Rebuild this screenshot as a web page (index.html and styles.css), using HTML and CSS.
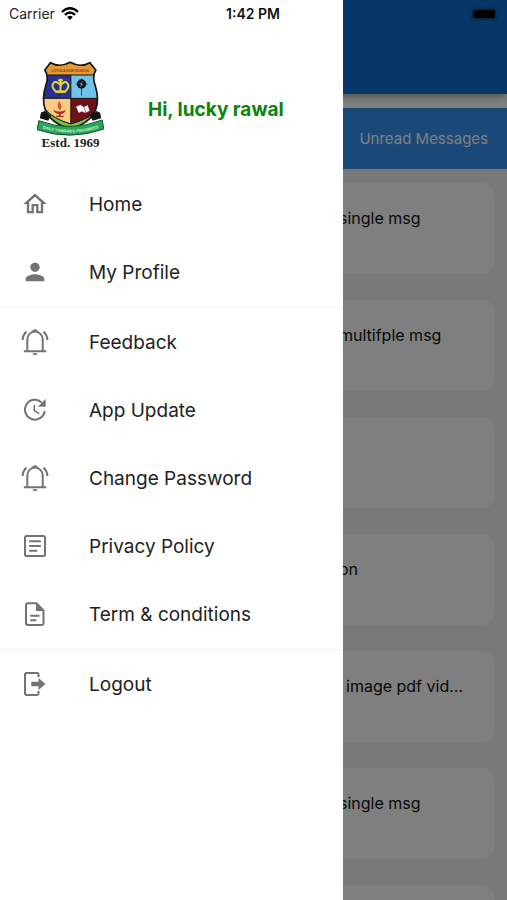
FILE: index.html
```html
<!DOCTYPE html>
<html lang="en">
<head>
<meta charset="utf-8">
<meta name="viewport" content="width=device-width, initial-scale=1">
<title>Messages</title>
<link rel="stylesheet" href="styles.css">
</head>
<body>
<div class="app">
  <main class="page">
    <header class="page__header"></header>
    <div class="tabs"><a class="tabs__link" href="#unread">Unread Messages</a></div>
    <ul class="cards">
      <li class="card">single msg</li>
      <li class="card">multifple msg</li>
      <li class="card"></li>
      <li class="card">on</li>
      <li class="card card--inset">image pdf vid...</li>
      <li class="card">single msg</li>
      <li class="card"></li>
    </ul>
  </main>
  <div class="scrim"></div>

  <aside class="drawer">
    <div class="profile">
      <div class="crest">
        <svg class="crest__shield" viewBox="20 15 200 228" aria-hidden="true">
          <defs>
            <clipPath id="shield"><path d="M60 20Q88 36 119 19Q150 36 178 20L196 42Q184 62 194 88Q207 130 196 160Q180 202 120 218Q60 202 44 160Q33 130 46 88Q56 62 43 42Z"/></clipPath>
            <path id="ribbon" d="M26 213Q120 247 214 212"/>
          </defs>
          <g clip-path="url(#shield)">
            <rect x="20" y="15" width="200" height="210" fill="#7fc241"/>
            <rect x="30" y="15" width="180" height="42" fill="#e39a35"/>
            <rect x="30" y="57" width="91" height="70" fill="#27318f"/>
            <rect x="121" y="57" width="90" height="70" fill="#72c3ea"/>
            <path d="M30 127H121V204Q70 184 46 160H30Z" fill="#fbcb83"/>
            <path d="M121 127H210V160Q180 190 121 204Z" fill="#701019"/>
            <path d="M36 57H205M36 127H205M121 57V204" fill="none" stroke="#151515" stroke-width="3"/>
            <path d="M43 160Q70 190 121 204Q172 190 198 160" fill="none" stroke="#151515" stroke-width="3"/>
          </g>
          <path d="M60 20Q88 36 119 19Q150 36 178 20L196 42Q184 62 194 88Q207 130 196 160Q180 202 120 218Q60 202 44 160Q33 130 46 88Q56 62 43 42Z" fill="none" stroke="#151515" stroke-width="5"/>
          <text x="120" y="49" text-anchor="middle" class="crest__name">LOYOLA HIGH SCHOOL</text>
          <path d="M72 78Q58 90 76 107H104Q122 90 107 78Q98 76 91 88Q82 76 72 78ZM90 68V105M83 73H97" fill="none" stroke="#e3d83c" stroke-width="6"/>
          <path d="M77 107H103" stroke="#e3d83c" stroke-width="7"/>
          <circle cx="153" cy="84" r="14" fill="#10141b"/>
          <path d="M145 78L160 91M159 76L149 92M153 97V119M136 84H171M153 67V100" fill="none" stroke="#10141b" stroke-width="2"/>
          <path d="M147 82L158 87M155 77L151 92" stroke="#9fcde0" stroke-width="2"/>
          <path d="M68 161Q87 172 106 161Q101 174 91 174V179H99V183H77V179H85V174Q73 173 68 161Z" fill="#b42c20"/>
          <path d="M86 135Q98 150 89 163Q75 153 86 135Z" fill="#dc5032"/>
          <path d="M137 152L150 147L160 154L171 148L177 164L164 170L154 166L145 170Z" fill="#fff" stroke="#dfcaca" stroke-width="1"/>
          <path d="M160 154L166 169" stroke="#701019" stroke-width="2"/>
          <path d="M31 170L42 165L62 179L53 194L28 187ZM209 170L198 165L178 179L187 194L212 187Z" fill="#151515"/>
          <path d="M25 194Q120 230 215 192L220 219Q120 255 20 221Z" fill="#28a75a" stroke="#15512c" stroke-width="3"/>
          <text text-anchor="middle" class="crest__motto"><textPath href="#ribbon" startOffset="50%">DAILY TOWARDS PROGRESS</textPath></text>
        </svg>
        <span class="crest__year">Estd. 1969</span>
      </div>
      <h1 class="profile__name">Hi, lucky rawal</h1>
    </div>

    <nav class="menu">
      <a class="menu__item" href="#home">
        <svg class="icon" viewBox="0 0 24 24" aria-hidden="true"><path d="M12 5.69l5 4.5V18h-2v-6H9v6H7v-7.81l5-4.5M12 3L2 12h3v8h6v-6h2v6h6v-8h3L12 3z"/></svg>Home</a>
      <a class="menu__item" href="#profile">
        <svg class="icon" viewBox="0 0 24 24" aria-hidden="true"><path d="M12 12c2.21 0 4-1.79 4-4s-1.79-4-4-4-4 1.79-4 4 1.79 4 4 4zm0 2c-2.67 0-8 1.34-8 4v2h16v-2c0-2.66-5.33-4-8-4z"/></svg>My Profile</a>
      <hr class="menu__rule">
      <a class="menu__item" href="#feedback">
        <svg class="icon icon--line" viewBox="0 0 28 28" aria-hidden="true"><path d="M6.3 23V11.500a7.700 8 0 0 1 15.400 0V23M2.800 23.300h22.400M1.500 12Q1.900 7 5.400 3.500M26.500 12Q26.100 7 22.600 3.500"/><path class="icon__solid" d="M11.200 4a2.800 2.800 0 0 1 5.600 0zM11.300 25.300h5.400q-.8 2-2.700 2t-2.700-2z"/></svg>Feedback</a>
      <a class="menu__item" href="#update">
        <svg class="icon icon--line" viewBox="0 0 28 28" aria-hidden="true"><path d="M20.800 6.600A9.900 9.900 0 1 0 23.700 15"/><path class="icon__thin" d="M13.300 8.700V14.600L18.300 17.600"/><path class="icon__solid" d="M24.700 3v7.800H16.800z"/></svg>App Update</a>
      <a class="menu__item" href="#password">
        <svg class="icon icon--line" viewBox="0 0 28 28" aria-hidden="true"><path d="M6.300 23V11.500a7.700 8 0 0 1 15.400 0V23M2.800 23.300h22.400M1.500 12Q1.900 7 5.400 3.500M26.500 12Q26.100 7 22.600 3.500"/><path class="icon__solid" d="M11.200 4a2.800 2.800 0 0 1 5.600 0zM11.300 25.300h5.400q-.8 2-2.700 2t-2.700-2z"/></svg>Change Password</a>
      <a class="menu__item" href="#privacy">
        <svg class="icon icon--line" viewBox="0 0 28 28" aria-hidden="true"><rect x="4" y="4" width="20" height="20" rx="1.500"/><path d="M8.200 9.200h11.600M8.200 14h11.600M8.200 18.800h8"/></svg>Privacy Policy</a>
      <a class="menu__item" href="#terms">
        <svg class="icon icon--line" viewBox="0 0 28 28" aria-hidden="true"><path d="M7 3.300h8.500l7 7V23a2 2 0 0 1-2 2H7a2 2 0 0 1-2-2V5.300a2 2 0 0 1 2-2zM9.300 15.700h9.200M9.300 20.300h6"/><path class="icon__solid" d="M15 3v8h8z"/></svg>Term &amp; conditions</a>
      <hr class="menu__rule">
      <a class="menu__item" href="#logout">
        <svg class="icon icon--line" viewBox="0 0 28 28" aria-hidden="true"><path d="M17.500 7V4.500a1.500 1.500 0 0 0-1.500-1.500H5.500A1.500 1.500 0 0 0 4 4.500v19A1.500 1.500 0 0 0 5.500 25H16a1.500 1.500 0 0 0 1.500-1.500V21"/><path class="icon__solid" d="M10.300 11.800h7.200V8l7 6-7 6v-3.800h-7.200z"/></svg>Logout</a>
    </nav>
  </aside>

  <div class="status">
    <span class="status__carrier">Carrier
      <svg class="status__wifi" viewBox="0 0 18 13" aria-hidden="true"><path d="M1 5Q9-2.500 17 5M3.900 7.900Q9 3.200 14.100 7.900" fill="none" stroke="#000" stroke-width="2.300"/><path d="M6.200 10Q9 7.500 11.800 10L9 13z"/></svg>
    </span>
    <time class="status__time">1:42 PM</time>
    <span class="status__battery"></span>
  </div>
</div>
</body>
</html>
```
FILE: styles.css
```css
* {
  box-sizing: border-box;
}

body {
  margin: 0;
  font-family: Inter, "Liberation Sans", sans-serif;
  color: #222;
}

a {
  color: inherit;
  text-decoration: none;
}

.app {
  position: relative;
  height: 100vh;
  overflow: hidden;
}

/* Message list behind the drawer */
.page {
  min-height: 100%;
  background: #eff4f2;
}

.page__header {
  position: relative;
  height: 94px;
  background: #0e6ed0;
  box-shadow: 0 2px 8px rgba(0, 0, 0, 0.4);
}

.tabs {
  display: flex;
  justify-content: flex-end;
  align-items: center;
  height: 75px;
  padding: 0 19px;
  border-top: 14px solid #fff;
  background: #3490f0;
  color: #fff;
  font-size: 15px;
}

.cards {
  display: grid;
  gap: 26px;
  margin: 0;
  padding: 14px 13px;
  list-style: none;
}

.card {
  height: 91px;
  padding: 23px 16px 0 326px;
  border-radius: 12px;
  background: #fff;
  color: #111;
  font-size: 16px;
  line-height: 24px;
  white-space: nowrap;
}

.card--inset {
  padding-left: 333px;
}

.scrim {
  position: absolute;
  inset: 0;
  background: rgba(0, 0, 0, 0.5);
}

/* Navigation drawer */
.drawer {
  position: absolute;
  inset: 0 auto 0 0;
  width: min(343px, 85%);
  background: #fff;
}

.profile {
  display: flex;
  align-items: center;
  gap: 44px;
  height: 170px;
  padding: 48px 16px 0 37px;
}

.crest {
  display: grid;
  justify-items: center;
  width: 67px;
  margin-bottom: 8px;
}

.crest__shield {
  width: 67px;
  height: 76px;
}

.crest__name {
  fill: #8a3517;
  font: bold 10px "Liberation Sans", sans-serif;
}

.crest__motto {
  fill: #d9f5dc;
  font: bold 12px "Liberation Sans", sans-serif;
}

.crest__year {
  font: bold 13px/12px "Liberation Serif", serif;
  white-space: nowrap;
}

.profile__name {
  margin: 0;
  color: #0a840a;
  font-size: 19px;
  font-weight: 700;
  white-space: nowrap;
}

.menu__item {
  display: flex;
  align-items: center;
  gap: 40px;
  height: 68px;
  padding: 0 21px;
  font-size: 19px;
  white-space: nowrap;
}

.menu__rule {
  height: 1px;
  margin: 1px 0 0;
  border: 0;
  background: #f2f2f2;
}

.icon {
  flex: none;
  width: 28px;
  height: 28px;
  fill: #737373;
}

.icon--line {
  fill: none;
  stroke: #737373;
  stroke-width: 2;
}

.icon__thin {
  stroke-width: 1.5;
}

.icon__solid {
  fill: #737373;
  stroke: none;
}

/* System status bar */
.status {
  position: absolute;
  inset: 0 0 auto 0;
  display: grid;
  grid-template-columns: 1fr auto 1fr;
  align-items: center;
  height: 27px;
  padding: 0 10px 0 9px;
  color: #222;
  font-size: 14px;
}

.status__carrier {
  display: flex;
  align-items: center;
  gap: 6px;
}

.status__wifi {
  width: 18px;
  height: 13px;
}

.status__time {
  color: #111;
  font-weight: 600;
}

.status__battery {
  justify-self: end;
  width: 22px;
  height: 8px;
  margin-right: 2px;
  border-radius: 2px;
  background: #000;
  box-shadow: 0 0 3px 1px rgba(0, 0, 0, 0.5);
}
```
